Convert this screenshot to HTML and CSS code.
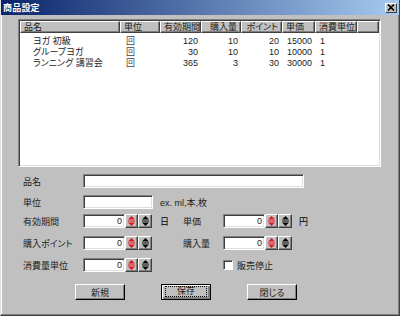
FILE: index.html
```html
<!DOCTYPE html>
<html lang="ja">
<head>
    <meta charset="UTF-8">
    <meta name="viewport" content="width=device-width, initial-scale=1.0">
    <title>商品設定</title>
    <link rel="stylesheet" href="styles.css">
</head>
<body>

    <div class="window">
        <div class="titlebar">
            <span class="title">商品設定</span>
            <span class="close-btn">
                <svg width="8" height="7" viewBox="0 0 8 7"><path d="M1 0.5 L7 6.5 M7 0.5 L1 6.5" stroke="#000" stroke-width="1.6"/></svg>
            </span>
        </div>

        <!-- 商品一覧 -->
        <div class="list">
            <div class="list-head">
                <div class="th">品名</div>
                <div class="th">単位</div>
                <div class="th num">有効期間</div>
                <div class="th num">購入量</div>
                <div class="th num">ポイント</div>
                <div class="th">単価</div>
                <div class="th">消費単位</div>
                <div class="th last"></div>
            </div>
            <div class="list-rows">
                <div class="tr">
                    <div class="td name">ヨガ 初級</div>
                    <div class="td unit">回</div>
                    <div class="td num">120</div>
                    <div class="td num">10</div>
                    <div class="td num">20</div>
                    <div class="td left">15000</div>
                    <div class="td left">1</div>
                </div>
                <div class="tr">
                    <div class="td name">グループヨガ</div>
                    <div class="td unit">回</div>
                    <div class="td num">30</div>
                    <div class="td num">10</div>
                    <div class="td num">10</div>
                    <div class="td left">10000</div>
                    <div class="td left">1</div>
                </div>
                <div class="tr">
                    <div class="td name">ランニング 講習会</div>
                    <div class="td unit">回</div>
                    <div class="td num">365</div>
                    <div class="td num">3</div>
                    <div class="td num">30</div>
                    <div class="td left">30000</div>
                    <div class="td left">1</div>
                </div>
            </div>
        </div>

        <!-- 入力フォーム -->
        <div class="form">
            <div class="row row-name">
                <span class="label">品名</span>
                <span class="field field-name"></span>
            </div>
            <div class="row row-unit">
                <span class="label">単位</span>
                <span class="field field-unit"></span>
                <span class="hint">ex. ml,本,枚</span>
            </div>
            <div class="row row-spin">
                <span class="label">有効期間</span>
                <span class="spin">
                    <span class="field spin-value">0</span>
                    <span class="spin-btn red"><svg width="7" height="10" viewBox="0 0 7 10"><path d="M3.5 0 L7 3.5 H0 Z M0 4.5 H7 V5.5 H0 Z M0 6.5 H7 L3.5 10 Z"/></svg></span>
                    <span class="spin-btn"><svg width="7" height="10" viewBox="0 0 7 10"><path d="M3.5 0 L7 3.5 H0 Z M0 4.5 H7 V5.5 H0 Z M0 6.5 H7 L3.5 10 Z"/></svg></span>
                </span>
                <span class="after">日</span>
                <span class="label label-right">単価</span>
                <span class="spin">
                    <span class="field spin-value">0</span>
                    <span class="spin-btn red"><svg width="7" height="10" viewBox="0 0 7 10"><path d="M3.5 0 L7 3.5 H0 Z M0 4.5 H7 V5.5 H0 Z M0 6.5 H7 L3.5 10 Z"/></svg></span>
                    <span class="spin-btn"><svg width="7" height="10" viewBox="0 0 7 10"><path d="M3.5 0 L7 3.5 H0 Z M0 4.5 H7 V5.5 H0 Z M0 6.5 H7 L3.5 10 Z"/></svg></span>
                </span>
                <span class="yen">円</span>
            </div>
            <div class="row row-spin">
                <span class="label">購入ポイント</span>
                <span class="spin">
                    <span class="field spin-value">0</span>
                    <span class="spin-btn red"><svg width="7" height="10" viewBox="0 0 7 10"><path d="M3.5 0 L7 3.5 H0 Z M0 4.5 H7 V5.5 H0 Z M0 6.5 H7 L3.5 10 Z"/></svg></span>
                    <span class="spin-btn"><svg width="7" height="10" viewBox="0 0 7 10"><path d="M3.5 0 L7 3.5 H0 Z M0 4.5 H7 V5.5 H0 Z M0 6.5 H7 L3.5 10 Z"/></svg></span>
                </span>
                <span class="after"></span>
                <span class="label label-right">購入量</span>
                <span class="spin">
                    <span class="field spin-value">0</span>
                    <span class="spin-btn red"><svg width="7" height="10" viewBox="0 0 7 10"><path d="M3.5 0 L7 3.5 H0 Z M0 4.5 H7 V5.5 H0 Z M0 6.5 H7 L3.5 10 Z"/></svg></span>
                    <span class="spin-btn"><svg width="7" height="10" viewBox="0 0 7 10"><path d="M3.5 0 L7 3.5 H0 Z M0 4.5 H7 V5.5 H0 Z M0 6.5 H7 L3.5 10 Z"/></svg></span>
                </span>
            </div>
            <div class="row row-spin">
                <span class="label">消費量単位</span>
                <span class="spin">
                    <span class="field spin-value">0</span>
                    <span class="spin-btn red"><svg width="7" height="10" viewBox="0 0 7 10"><path d="M3.5 0 L7 3.5 H0 Z M0 4.5 H7 V5.5 H0 Z M0 6.5 H7 L3.5 10 Z"/></svg></span>
                    <span class="spin-btn"><svg width="7" height="10" viewBox="0 0 7 10"><path d="M3.5 0 L7 3.5 H0 Z M0 4.5 H7 V5.5 H0 Z M0 6.5 H7 L3.5 10 Z"/></svg></span>
                </span>
                <span class="after"></span>
                <span class="label label-right"></span>
                <span class="checkbox"></span>
                <span class="check-text">販売停止</span>
            </div>

            <div class="buttons">
                <span class="btn">新規</span>
                <span class="btn default"><span class="focus">保存</span></span>
                <span class="btn">閉じる</span>
            </div>
        </div>
    </div>

</body>
</html>
```

FILE: styles.css
```css
body {
    margin: 0;
    padding: 0;
    font-family: "Liberation Sans", "Noto Sans CJK JP", sans-serif;
    font-feature-settings: "palt";
    font-size: 9px;
    color: #000;
    background: #c0c0c0;
}
.window {
    width: 400px;
    height: 316px;
    box-sizing: border-box;
    background: #c0c0c0;
    border-left: 1px solid #dfdfdf;
    border-right: 1px solid #404040;
    border-bottom: 1px solid #404040;
    box-shadow: inset -1px -1px 0 #808080, inset 1px 0 0 #fff;
}
.titlebar {
    height: 15px;
    display: flex;
    align-items: center;
    justify-content: space-between;
    padding: 0 2px 0 2px;
    background: linear-gradient(to right, #0a246a, #a6caf0);
}
.title {
    color: #fff;
    font-weight: bold;
    font-size: 9px;
    letter-spacing: 0.2px;
}
.close-btn {
    width: 12px;
    height: 10px;
    box-sizing: border-box;
    background: #c0c0c0;
    border: 1px solid;
    border-color: #fff #404040 #404040 #fff;
    display: flex;
    align-items: center;
    justify-content: center;
}

/* list view */
.list {
    margin: 4px 0 0 17px;
    width: 363px;
    height: 148px;
    box-sizing: border-box;
    background: #fff;
    border: 1px solid;
    border-color: #808080 #fff #fff #808080;
    box-shadow: inset 1px 1px 0 #404040, inset -1px -1px 0 #dfdfdf;
    padding: 1px;
}
.list-head,
.tr {
    display: grid;
    grid-template-columns: 100px 40px 41px 40px 41px 33px 42px 1fr;
}
.th {
    height: 12px;
    line-height: 11px;
    box-sizing: border-box;
    padding-left: 3px;
    background: #c0c0c0;
    border: 1px solid;
    border-color: #fff #404040 #404040 #fff;
    box-shadow: inset -1px -1px 0 #808080;
    color: #222;
    white-space: nowrap;
    overflow: hidden;
}
.th.num {
    text-align: right;
    padding-right: 3px;
}
.list-rows {
    padding-top: 3px;
}
.tr {
    height: 11px;
}
.td {
    height: 11px;
    line-height: 11px;
    color: #222;
    white-space: nowrap;
}
.td.name {
    padding-left: 13px;
}
.td.unit {
    padding-left: 6px;
    color: #444;
}
.td.num {
    text-align: right;
    padding-right: 3px;
}
.td.left {
    padding-left: 5px;
}

/* form */
.form {
    padding-left: 22px;
}
.row {
    display: flex;
    align-items: center;
    height: 14px;
}
.row-name {
    margin-top: 7px;
}
.row-unit {
    margin-top: 7px;
}
.row-spin {
    margin-top: 8px;
}
.row-unit + .row-spin {
    margin-top: 5px;
}
.label {
    width: 60px;
    flex: none;
    color: #222;
}
.label-right {
    width: 40px;
}
.field {
    display: block;
    height: 14px;
    box-sizing: border-box;
    background: #fff;
    border: 1px solid;
    border-color: #808080 #fff #fff #808080;
    box-shadow: inset 1px 1px 0 #404040, inset -1px -1px 0 #dfdfdf;
}
.field-name {
    width: 221px;
}
.field-unit {
    width: 70px;
}
.hint {
    margin-left: 7px;
    color: #222;
}
.spin {
    display: flex;
    width: 69px;
    flex: none;
}
.spin-value {
    width: 42px;
    text-align: right;
    padding-right: 2px;
    line-height: 12px;
    color: #222;
}
.spin-btn {
    width: 13px;
    height: 14px;
    box-sizing: border-box;
    background: #c0c0c0;
    border: 1px solid;
    border-color: #fff #404040 #404040 #fff;
    box-shadow: inset -1px -1px 0 #808080;
    display: flex;
    align-items: center;
    justify-content: center;
    fill: #000;
}
.spin-btn + .spin-btn {
    width: 14px;
}
.spin-btn.red {
    fill: #e8141c;
}
.after {
    width: 31px;
    flex: none;
    box-sizing: border-box;
    padding-left: 8px;
}
.yen {
    padding-left: 7px;
}
.checkbox {
    width: 10px;
    height: 10px;
    box-sizing: border-box;
    background: #fff;
    border: 1px solid;
    border-color: #808080 #fff #fff #808080;
    box-shadow: inset 1px 1px 0 #404040;
}
.check-text {
    margin-left: 4px;
    color: #222;
}

/* buttons */
.buttons {
    display: flex;
    gap: 36px;
    margin: 12px 0 0 52px;
}
.btn {
    width: 50px;
    height: 16px;
    box-sizing: border-box;
    background: #c0c0c0;
    border: 1px solid;
    border-color: #fff #000 #000 #fff;
    box-shadow: inset -1px -1px 0 #808080;
    display: flex;
    align-items: center;
    justify-content: center;
    color: #222;
}
.btn.default {
    border: 1px solid #000;
    box-shadow: inset 1px 1px 0 #fff, inset -2px -2px 0 #808080;
    padding: 1px 3px 2px 3px;
}
.focus {
    flex: 1;
    align-self: stretch;
    display: flex;
    align-items: center;
    justify-content: center;
    line-height: 9px;
    border: 1px dotted #000;
}
```
